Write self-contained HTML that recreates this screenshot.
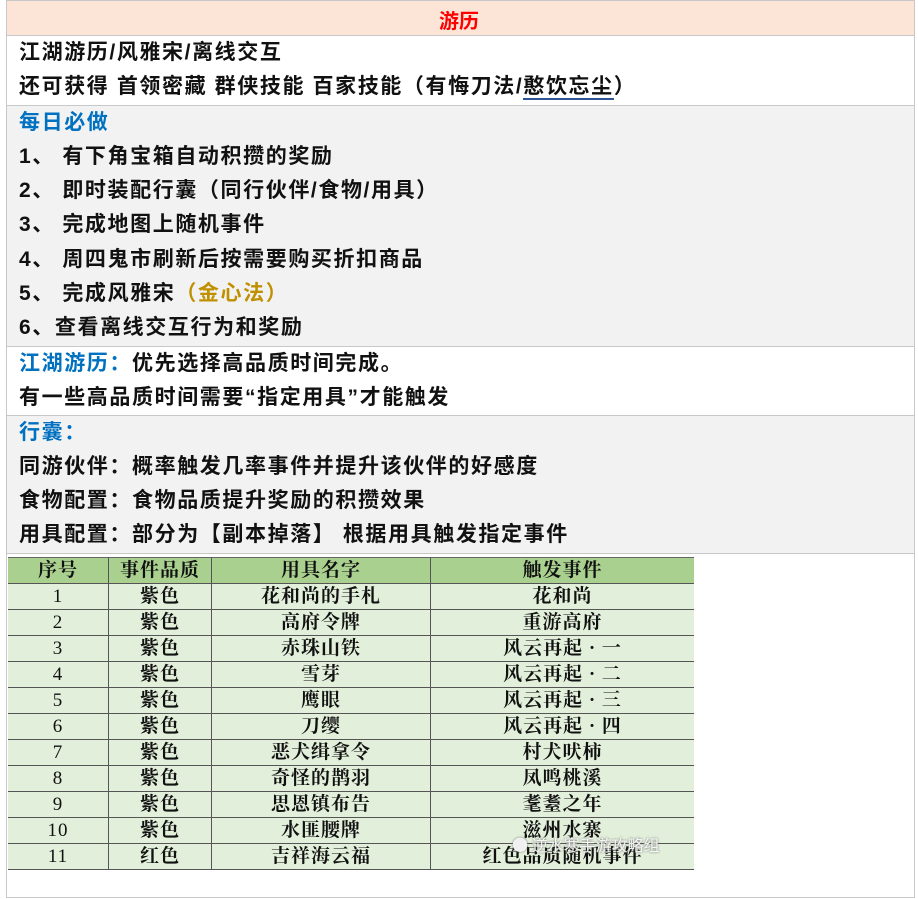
<!DOCTYPE html><html><head><meta charset="utf-8"><style>
body{margin:0;width:918px;height:899px;background:#fff;font-family:"Liberation Sans","Noto Sans CJK SC",sans-serif;overflow:hidden;position:relative}
.box{position:absolute;left:6px;width:909px;border:1px solid #c8c8c8;border-top:none;box-sizing:border-box}
.ln{position:absolute;left:19px;font-size:21px;line-height:34px;color:#111;white-space:nowrap;letter-spacing:1.6px;font-weight:bold}
.b{color:#0070c0;font-weight:bold}
table{position:absolute;left:8px;top:557px;width:686px;border-collapse:collapse;font-family:"Liberation Serif","Noto Serif CJK SC",serif;font-size:19px;font-weight:bold;color:#111;letter-spacing:1px}
td{border:1px solid #555;border-top:1px solid #666;height:25px;padding:0;text-align:center;line-height:25px;background:#e2efda}
tr:first-child td{background:#a9d08e}
td:first-child{border-left:none;font-weight:normal}td:last-child{border-right:none}
</style></head><body>
<div class="box" style="top:0;height:36px;background:#fce4d6;border-top:1px solid #c8c8c8"></div>
<div style="position:absolute;top:5px;left:0;width:918px;text-align:center;color:#f00;font-weight:bold;font-size:20px">游历</div>
<div class="box" style="top:35px;height:71px;background:#fff;border-top:1px solid #c8c8c8"></div>
<div class="box" style="top:105px;height:242px;background:#f2f2f2;border-top:1px solid #c8c8c8"></div>
<div class="box" style="top:346px;height:70px;background:#fff;border-top:1px solid #c8c8c8"></div>
<div class="box" style="top:415px;height:139px;background:#f2f2f2;border-top:1px solid #c8c8c8"></div>
<div class="box" style="top:553px;height:345px;background:#fff;border-top:1px solid #c8c8c8;border-bottom:1px solid #c8c8c8"></div>
<div class="ln" style="top:36px">江湖游历/风雅宋/离线交互</div>
<div class="ln" style="top:70px">还可获得 首领密藏 群侠技能 百家技能（有悔刀法/<span style="border-bottom:2px solid #2f5597">憨饮忘尘</span>）</div>
<div class="ln b" style="top:106px">每日必做</div>
<div class="ln" style="top:140px">1、 有下角宝箱自动积攒的奖励</div>
<div class="ln" style="top:174px">2、 即时装配行囊（同行伙伴/食物/用具）</div>
<div class="ln" style="top:208px">3、 完成地图上随机事件</div>
<div class="ln" style="top:243px">4、 周四鬼市刷新后按需要购买折扣商品</div>
<div class="ln" style="top:277px">5、 完成风雅宋<span style="color:#bf9000;font-weight:bold">（金心法）</span></div>
<div class="ln" style="top:311px">6、查看离线交互行为和奖励</div>
<div class="ln" style="top:347px"><span class="b">江湖游历：</span>优先选择高品质时间完成。</div>
<div class="ln" style="top:381px">有一些高品质时间需要“指定用具”才能触发</div>
<div class="ln b" style="top:416px">行囊：</div>
<div class="ln" style="top:450px">同游伙伴：概率触发几率事件并提升该伙伴的好感度</div>
<div class="ln" style="top:484px">食物配置：食物品质提升奖励的积攒效果</div>
<div class="ln" style="top:518px">用具配置：部分为【副本掉落】 根据用具触发指定事件</div>
<table>
<tr><td style="width:100px;font-weight:bold">序号</td><td style="width:102px">事件品质</td><td style="width:218px">用具名字</td><td>触发事件</td></tr>
<tr><td>1</td><td>紫色</td><td>花和尚的手札</td><td>花和尚</td></tr>
<tr><td>2</td><td>紫色</td><td>高府令牌</td><td>重游高府</td></tr>
<tr><td>3</td><td>紫色</td><td>赤珠山铁</td><td>风云再起 · 一</td></tr>
<tr><td>4</td><td>紫色</td><td>雪芽</td><td>风云再起 · 二</td></tr>
<tr><td>5</td><td>紫色</td><td>鹰眼</td><td>风云再起 · 三</td></tr>
<tr><td>6</td><td>紫色</td><td>刀缨</td><td>风云再起 · 四</td></tr>
<tr><td>7</td><td>紫色</td><td>恶犬缉拿令</td><td>村犬吠柿</td></tr>
<tr><td>8</td><td>紫色</td><td>奇怪的鹊羽</td><td>凤鸣桃溪</td></tr>
<tr><td>9</td><td>紫色</td><td>思恩镇布告</td><td>耄耋之年</td></tr>
<tr><td>10</td><td>紫色</td><td>水匪腰牌</td><td>滋州水寨</td></tr>
<tr><td>11</td><td>红色</td><td>吉祥海云福</td><td>红色品质随机事件</td></tr>
</table>
<div style="position:absolute;left:512px;top:832px;font-size:16px;color:rgba(255,255,255,.9);text-shadow:0 0 2px #666;font-family:'Noto Sans CJK SC',sans-serif">● 逆水寒手游攻略组</div>
</body></html>
